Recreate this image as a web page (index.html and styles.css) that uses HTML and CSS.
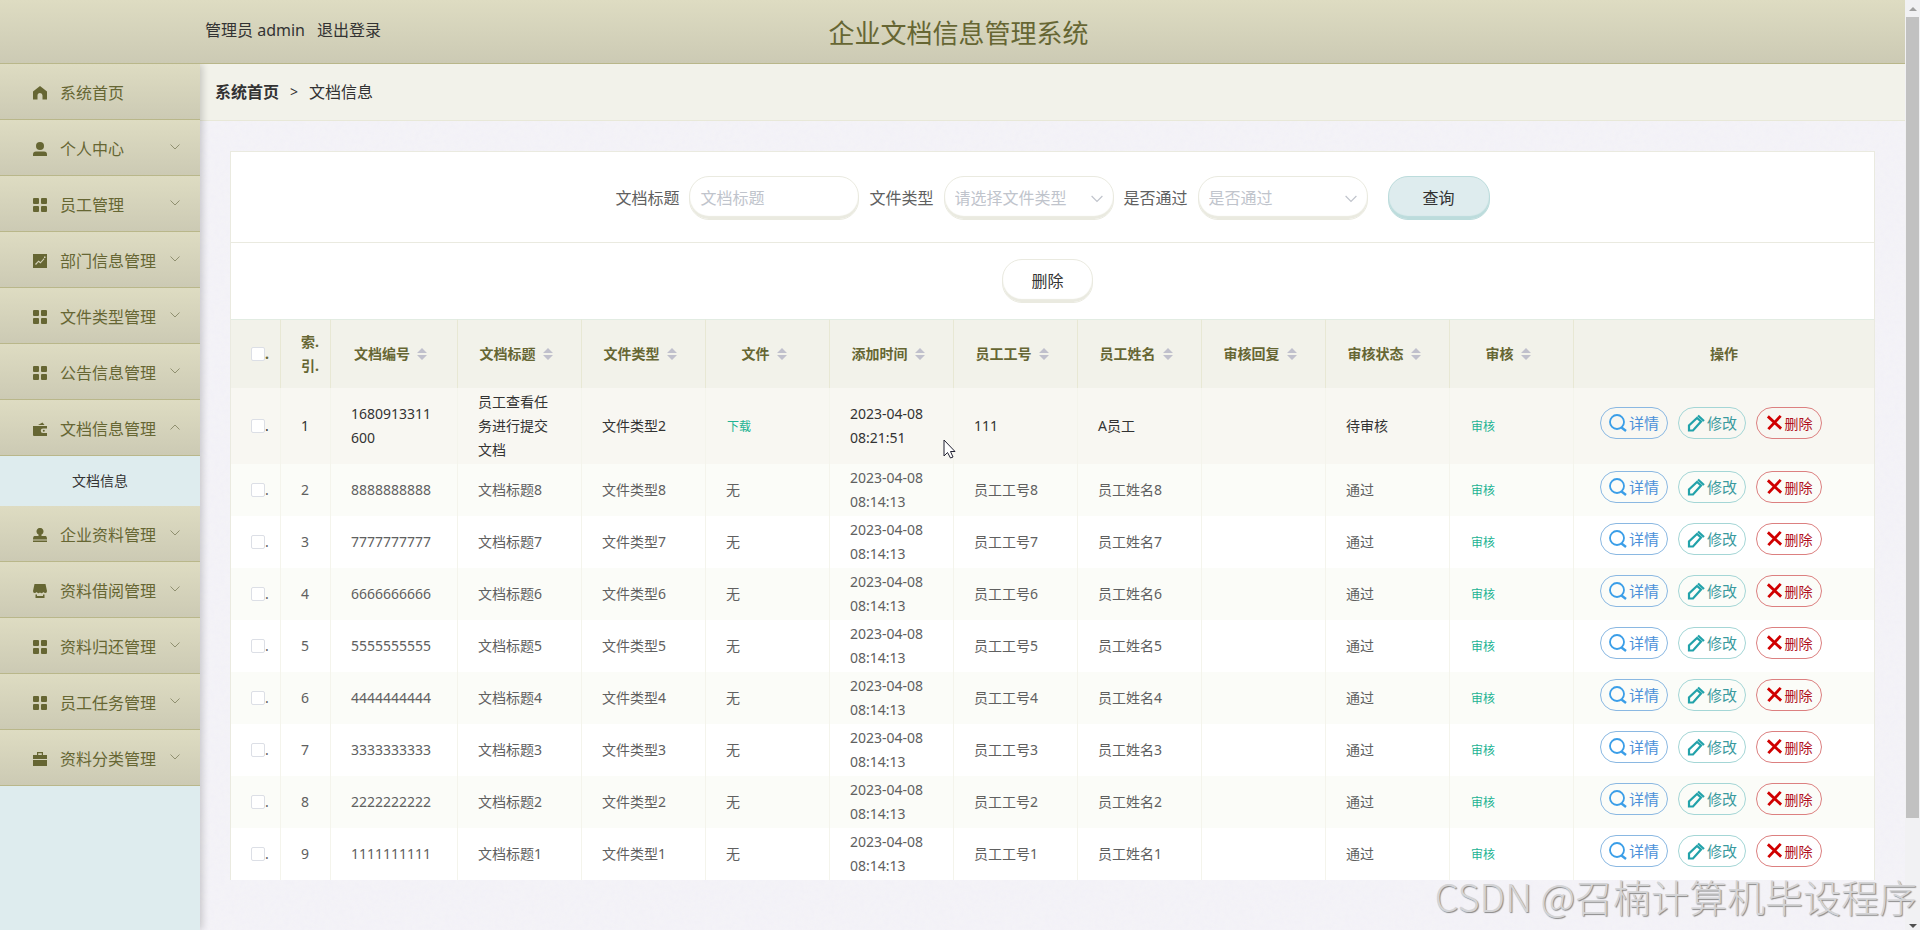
FILE: index.html
```html
<!DOCTYPE html>
<html lang="zh-CN">
<head>
    <meta charset="UTF-8">
    <meta name="viewport" content="width=device-width, initial-scale=1.0">
    <title>企业文档信息管理系统</title>
    <link rel="stylesheet" href="styles.css">
</head>
<body>
    <svg class="sprite" aria-hidden="true">
        <symbol id="i-home" viewBox="0 0 14 14"><path d="M7 0L0 5.5V13.5H4.5V9.5A2.5 2.5 0 0 1 9.5 9.5V13.5H14V5.5Z"/></symbol>
        <symbol id="i-user" viewBox="0 0 14 14"><circle cx="7" cy="4" r="4"/><path d="M0 14V12.500Q0 9.500 3 9.500H11Q14 9.500 14 12.500V14Z"/></symbol>
        <symbol id="i-menu" viewBox="0 0 14 14"><rect width="6" height="6" rx="1"/><rect x="8" width="6" height="6" rx="1"/><rect y="8" width="6" height="6" rx="1"/><rect x="8" y="8" width="6" height="6" rx="1"/></symbol>
        <symbol id="i-chart" viewBox="0 0 14 14"><path fill-rule="evenodd" d="M0 0H14V14H0ZM2 10L3 11L5.500 8L7.500 9.500L11.500 5L10.800 4.200L7.500 8L5.500 6.500ZM11 2.500H12.500V4H11Z"/></symbol>
        <symbol id="i-wallet" viewBox="0 0 14 14"><path d="M5 3L9.500 0.500L11.500 3Z"/><path d="M0 4H14V6.500H10A2.200 2.200 0 0 0 10 11H14V14H1Q0 14 0 13Z"/><circle cx="10.800" cy="8.800" r="1"/></symbol>
        <symbol id="i-stamp" viewBox="0 0 14 14"><path d="M5.500 8V6.500A3.500 3.500 0 1 1 8.500 6.500V8H12.500Q14 8 14 11.500H0Q0 8 1.500 8Z"/><rect y="12.500" width="14" height="1.500"/></symbol>
        <symbol id="i-shop" viewBox="0 0 14 14"><path d="M1.500 0H12.500L14 7Q14 9 12.500 9Q11 9 10.500 8Q9 10 7 8.500Q5 10 3.500 8Q3 9 1.500 9Q0 9 0 7Z"/><path d="M2.500 10.500H4V12H10V10.500H11.500V14H2.500Z"/></symbol>
        <symbol id="i-case" viewBox="0 0 14 14"><path d="M4 3V0H10V3H14V7H0V3ZM5.200 3H8.800V1.200H5.200Z" fill-rule="evenodd"/><rect y="8" width="14" height="6"/></symbol>
        <symbol id="i-arrow" viewBox="0 0 10 6"><path d="M0.500 0.500L5 5L9.500 0.500" fill="none" stroke="currentColor"/></symbol>
        <symbol id="i-sort" viewBox="0 0 10 12"><path d="M5 0L10 5H0ZM5 12L10 7H0Z"/></symbol>
        <symbol id="i-search" viewBox="0 0 18 18"><circle cx="8" cy="8" r="7" fill="none" stroke="currentColor" stroke-width="1.800"/><path d="M12.500 13.500L17 17" stroke="currentColor" stroke-width="2.400"/></symbol>
        <symbol id="i-edit" viewBox="0 0 18 18"><path d="M2 16.500V11.500L10 4L14 7.500L6 16.500Z M11 1.500L17 7" fill="none" stroke="currentColor" stroke-width="2.200"/></symbol>
        <symbol id="i-close" viewBox="0 0 18 18"><path d="M2 2.500L16 15.500M15.500 2L2.500 16" stroke="currentColor" stroke-width="3"/></symbol>
    </svg>

    <div class="page">
        <header>
            <div class="user">
                <span>管理员 admin</span>
                <a href="#">退出登录</a>
            </div>
            <h1>企业文档信息管理系统</h1>
        </header>

        <div class="container">
            <nav class="sidebar">
                <a class="menu-item" href="#"><svg class="icon"><use href="#i-home"/></svg>系统首页</a>
                <a class="menu-item" href="#"><svg class="icon"><use href="#i-user"/></svg>个人中心<svg class="arrow"><use href="#i-arrow"/></svg></a>
                <a class="menu-item" href="#"><svg class="icon"><use href="#i-menu"/></svg>员工管理<svg class="arrow"><use href="#i-arrow"/></svg></a>
                <a class="menu-item" href="#"><svg class="icon"><use href="#i-chart"/></svg>部门信息管理<svg class="arrow"><use href="#i-arrow"/></svg></a>
                <a class="menu-item" href="#"><svg class="icon"><use href="#i-menu"/></svg>文件类型管理<svg class="arrow"><use href="#i-arrow"/></svg></a>
                <a class="menu-item" href="#"><svg class="icon"><use href="#i-menu"/></svg>公告信息管理<svg class="arrow"><use href="#i-arrow"/></svg></a>
                <a class="menu-item" href="#"><svg class="icon"><use href="#i-wallet"/></svg>文档信息管理<svg class="arrow open"><use href="#i-arrow"/></svg></a>
                <a class="sub-item" href="#">文档信息</a>
                <a class="menu-item" href="#"><svg class="icon"><use href="#i-stamp"/></svg>企业资料管理<svg class="arrow"><use href="#i-arrow"/></svg></a>
                <a class="menu-item" href="#"><svg class="icon"><use href="#i-shop"/></svg>资料借阅管理<svg class="arrow"><use href="#i-arrow"/></svg></a>
                <a class="menu-item" href="#"><svg class="icon"><use href="#i-menu"/></svg>资料归还管理<svg class="arrow"><use href="#i-arrow"/></svg></a>
                <a class="menu-item" href="#"><svg class="icon"><use href="#i-menu"/></svg>员工任务管理<svg class="arrow"><use href="#i-arrow"/></svg></a>
                <a class="menu-item" href="#"><svg class="icon"><use href="#i-case"/></svg>资料分类管理<svg class="arrow"><use href="#i-arrow"/></svg></a>
            </nav>

            <main>
                <div class="breadcrumb">
                    <a href="#">系统首页</a>
                    <span class="sep">&gt;</span>
                    <span>文档信息</span>
                </div>

                <div class="card">
                    <form class="search">
                        <label for="title">文档标题</label>
                        <input class="field" id="title" type="text" placeholder="文档标题">
                        <label for="type">文件类型</label>
                        <div class="select">
                            <select class="field" id="type"><option>请选择文件类型</option></select>
                            <svg><use href="#i-arrow"/></svg>
                        </div>
                        <label for="pass">是否通过</label>
                        <div class="select">
                            <select class="field" id="pass"><option>是否通过</option></select>
                            <svg><use href="#i-arrow"/></svg>
                        </div>
                        <button class="btn btn-query" type="button">查询</button>
                    </form>

                    <div class="tools">
                        <button class="btn" type="button">删除</button>
                    </div>

                    <table>
                        <colgroup>
                            <col class="w-small">
                            <col class="w-small">
                            <col class="w-code">
                            <col span="9">
                            <col class="w-actions">
                        </colgroup>
                        <thead>
                            <tr>
                                <th class="left"><label class="check"><input type="checkbox" aria-label="全选">.</label></th>
                                <th class="left">索.<br>引.</th>
                                <th><span class="sort">文档编号<svg><use href="#i-sort"/></svg></span></th>
                                <th><span class="sort">文档标题<svg><use href="#i-sort"/></svg></span></th>
                                <th><span class="sort">文件类型<svg><use href="#i-sort"/></svg></span></th>
                                <th><span class="sort">文件<svg><use href="#i-sort"/></svg></span></th>
                                <th><span class="sort">添加时间<svg><use href="#i-sort"/></svg></span></th>
                                <th><span class="sort">员工工号<svg><use href="#i-sort"/></svg></span></th>
                                <th><span class="sort">员工姓名<svg><use href="#i-sort"/></svg></span></th>
                                <th><span class="sort">审核回复<svg><use href="#i-sort"/></svg></span></th>
                                <th><span class="sort">审核状态<svg><use href="#i-sort"/></svg></span></th>
                                <th><span class="sort">审核<svg><use href="#i-sort"/></svg></span></th>
                                <th>操作</th>
                            </tr>
                        </thead>
                        <tbody id="rows"></tbody>
                    </table>
                </div>
            </main>
        </div>
    </div>

    <div class="scrollbar">
        <div class="up"></div>
        <div class="thumb"></div>
        <div class="down"></div>
    </div>

    <div class="watermark">CSDN @召楠计算机毕设程序</div>
    <svg class="cursor" viewBox="0 0 13 20"><path d="M1 1V17L4.500 13.500L7.500 19L10 18L7.500 12.500H12Z" fill="#fff" stroke="#223"/></svg>

    <script>
        const docs = [
            { code: '1680913311600', title: '员工查看任务进行提交文档', type: '文件类型2', file: '<button class="link" type="button">下载</button>', time: '2023-04-08 08:21:51', no: '111', name: 'A员工', state: '待审核' }
        ];

        for (let n = 8; n > 0; n--) {
            docs.push({
                code: String(n).repeat(10),
                title: '文档标题' + n,
                type: '文件类型' + n,
                file: '无',
                time: '2023-04-08 08:14:13',
                no: '员工工号' + n,
                name: '员工姓名' + n,
                state: '通过'
            });
        }

        document.getElementById('rows').innerHTML = docs.map((d, i) => `
            <tr class="${i === 0 ? 'hover' : ''}">
                <td><label class="check"><input type="checkbox" aria-label="选择${i + 1}">.</label></td>
                <td>${i + 1}</td>
                <td>${d.code}</td>
                <td>${d.title}</td>
                <td>${d.type}</td>
                <td>${d.file}</td>
                <td>${d.time}</td>
                <td>${d.no}</td>
                <td>${d.name}</td>
                <td></td>
                <td>${d.state}</td>
                <td><button class="link" type="button">审核</button></td>
                <td>
                    <div class="actions">
                        <button class="detail" type="button"><svg><use href="#i-search"/></svg>详情</button>
                        <button class="edit" type="button"><svg><use href="#i-edit"/></svg>修改</button>
                        <button class="remove" type="button"><svg><use href="#i-close"/></svg>删除</button>
                    </div>
                </td>
            </tr>`).join('');
    </script>
</body>
</html>
```
FILE: styles.css
```css
* {
    margin: 0;
    padding: 0;
    box-sizing: border-box;
}

body {
    display: flex;
    position: relative;
    min-height: 100vh;
    font-family: "Noto Sans", "Noto Sans CJK SC", sans-serif;
    font-size: 16px;
    line-height: 24px;
    color: #333;
    background-color: #f4f3f8;
    /* paper grain */
    background-image: url("data:image/svg+xml,%3Csvg xmlns='http://www.w3.org/2000/svg' width='300' height='300'%3E%3Cfilter id='n'%3E%3CfeTurbulence type='fractalNoise' baseFrequency='0.2' numOctaves='3' stitchTiles='stitch'/%3E%3CfeColorMatrix values='0 0 0 0 0.8 0 0 0 0 0.78 0 0 0 0 0.82 0 0 0 0.3 0'/%3E%3C/filter%3E%3Crect width='300' height='300' filter='url(%23n)' opacity='0.5'/%3E%3C/svg%3E");
}

a {
    color: inherit;
    text-decoration: none;
}

button, input, select {
    font-family: inherit;
}

button {
    cursor: pointer;
}

svg {
    fill: currentColor;
    flex: none;
}

.sprite {
    position: absolute;
    width: 0;
    height: 0;
}

.page {
    flex: 1;
    min-width: 0;
    display: flex;
    flex-direction: column;
}

header {
    display: grid;
    grid-template-columns: 1fr auto 1fr;
    align-items: center;
    height: 64px;
    padding-left: 12px;
    background: linear-gradient(#dedcc2, #cccab4);
    border-bottom: 1px solid #b9b78a;
}

.user {
    display: flex;
    gap: 12px;
    padding: 0 0 4px 193px;
}

header h1 {
    padding-top: 2px;
    font-size: 26px;
    font-weight: normal;
    line-height: 40px;
    color: #666633;
}

.container {
    flex: 1;
    display: flex;
}

.sidebar {
    width: 200px;
    flex: none;
    background-color: #deecee;
    box-shadow: 2px 0 8px rgba(0, 0, 0, 0.2);
    clip-path: inset(0 -12px 0 0);
}

.menu-item {
    display: flex;
    align-items: center;
    height: 56px;
    padding: 2px 20px 0 33px;
    color: #666633;
    background: linear-gradient(#dedcc2, #cccab4);
    border-bottom: 1px solid #b9b78a;
}

.menu-item .icon {
    width: 14px;
    height: 14px;
    margin-right: 13px;
}

.menu-item .arrow {
    width: 10px;
    height: 6px;
    margin: 0 0 4px auto;
    color: #909070;
}

.menu-item .arrow.open {
    transform: rotate(180deg);
}

.sub-item {
    display: block;
    font-size: 14px;
    line-height: 50px;
    text-align: center;
}

main {
    flex: 1;
    min-width: 0;
}

.breadcrumb {
    display: flex;
    align-items: center;
    gap: 11px;
    height: 57px;
    padding-left: 15px;
    background-color: #f2f2ea;
    border-bottom: 1px solid #e8e8d8;
}

.breadcrumb a {
    font-weight: bold;
}

.breadcrumb .sep {
    font-size: 14px;
}

.card {
    margin: 30px;
    background-color: #fff;
    border: 1px solid #eaeae0;
    border-bottom: none;
}

.search {
    display: flex;
    justify-content: center;
    align-items: center;
    gap: 10px;
    padding: 24px 0 22px;
    border-bottom: 1px solid #eaeae0;
}

.search label {
    color: #606060;
}

.field {
    display: block;
    width: 170px;
    height: 44px;
    padding: 0 10px;
    font-size: 16px;
    color: #c0c4cc;
    background-color: #fff;
    border: 1px solid #eaeae0;
    border-radius: 20px;
    box-shadow: inset 0 -3px 1px #eaeae0;
    appearance: none;
    outline: none;
}

.field::placeholder {
    color: #c0c4cc;
}

.select {
    position: relative;
}

.select svg {
    position: absolute;
    right: 11px;
    top: 19px;
    width: 12px;
    height: 8px;
    color: #c0c4cc;
}

.btn {
    height: 44px;
    padding: 0 28px 2px;
    font-size: 16px;
    color: #333;
    background-color: #fff;
    border: 1px solid #eaeae0;
    border-radius: 20px;
    box-shadow: inset 0 -3px 1px #eaeae0;
}

.btn-query {
    margin-left: 10px;
    padding: 0 34px 2px;
    background-color: #deecee;
    border-color: #bcdcdc;
    box-shadow: inset 0 -3px 1px #bcdcdc;
}

.tools {
    padding: 16px 10px 16px 0;
    text-align: center;
    line-height: 0;
}

table {
    width: 100%;
    table-layout: fixed;
    border-collapse: separate;
    border-spacing: 0;
    font-size: 14px;
    color: #606060;
}

.w-small {
    width: 50px;
}

.w-code {
    width: 127px;
}

.w-actions {
    width: 300px;
}

th {
    height: 69px;
    padding-bottom: 1px;
    color: #666633;
    background-color: #f2f2ea;
    border-top: 1px solid #e2ece2;
    border-right: 1px solid #e8e8d4;
}

th.left {
    padding-left: 20px;
    text-align: left;
}

td {
    padding: 2px 20px;
    word-break: break-all;
    border-right: 1px solid #f4f4ec;
}

td:first-child, td:last-child {
    padding-right: 0;
}

td:last-child, th:last-child {
    border-right: none;
}

tbody tr:nth-child(even) {
    background-color: #fbfcf8;
}

tbody tr.hover {
    color: #333;
    background-color: #f8f7f2;
}

.check {
    display: flex;
    align-items: center;
}

.check input {
    width: 14px;
    height: 14px;
    background-color: #fff;
    border: 1px solid #dcdfe6;
    border-radius: 2px;
    appearance: none;
}

.sort {
    display: inline-flex;
    align-items: center;
}

.sort svg {
    width: 10px;
    height: 12px;
    margin: 0 7px;
    color: #c0c0cc;
}

.link {
    font-size: 12px;
    padding: 0 1px;
    color: #22b393;
    background: none;
    border: none;
}

.actions {
    display: flex;
    gap: 10px;
    padding: 0 0 6px 6px;
}

.actions button {
    display: flex;
    align-items: center;
    justify-content: center;
    gap: 2px;
    width: 68px;
    height: 32px;
    padding-bottom: 1px;
    font-size: 15px;
    background: none;
    border: 1px solid;
    border-radius: 16px;
}

.actions svg {
    width: 18px;
    height: 18px;
}

.actions .detail {
    color: #4a90d9;
    border-color: #8ab8e2;
}

.actions .detail svg {
    color: #3a9ee8;
}

.actions .edit {
    color: #3a9a9e;
    border-color: #a4d6d6;
}

.actions .edit svg {
    color: #22a2aa;
}

.actions .remove {
    width: 66px;
    font-size: 14px;
    color: #b01020;
    border-color: #dc8080;
}

.actions .remove svg {
    width: 17px;
    height: 17px;
    color: #d00000;
}

.scrollbar {
    display: flex;
    flex-direction: column;
    align-items: center;
    width: 15px;
    padding: 7px 0 2px;
    background-color: #f1f1f3;
}

.scrollbar .up {
    border: 4px solid transparent;
    border-top: none;
    border-bottom-color: #a0a0a0;
}

.scrollbar .thumb {
    flex: 0 0 87%;
    width: 13px;
    margin-top: 6px;
    background-color: #c1c1c1;
}

.scrollbar .down {
    margin-top: auto;
    border: 4px solid transparent;
    border-bottom: none;
    border-top-color: #505050;
}

.watermark {
    position: absolute;
    right: 3px;
    bottom: 6px;
    font-family: "Noto Sans CJK SC", sans-serif;
    font-size: 38px;
    font-weight: 300;
    line-height: 56px;
    color: #d4d4d6;
    text-shadow: 1px 1px 1px #888;
    pointer-events: none;
}

.cursor {
    position: absolute;
    left: 943px;
    top: 439px;
    width: 13px;
    height: 20px;
}
```
